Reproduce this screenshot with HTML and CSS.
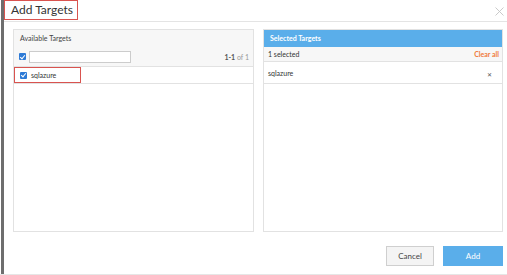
FILE: index.html
```html
<!DOCTYPE html>
<html lang="en">
<head>
  <meta charset="UTF-8">
  <title>Add Targets</title>
  <link rel="stylesheet" href="styles.css">
</head>
<body>
  <div class="frame">
    <div class="edge"></div>
    <div class="dialog">
      <div class="dialog-head">
        <div class="title">Add Targets</div>
        <svg class="close" width="9" height="9" viewBox="0 0 9 9">
          <path d="M0.5 0.5 L8.5 8.5 M8.5 0.5 L0.5 8.5" stroke="#c4c4c4" stroke-width="0.9" fill="none"/>
        </svg>
      </div>

      <div class="panels">
        <div class="panel">
          <div class="panel-head">Available Targets</div>
          <div class="search-row">
            <span class="check"></span>
            <input class="search" type="text">
            <span class="count"><b>1-1</b> of 1</span>
          </div>
          <div class="item-row">
            <div class="item highlight">
              <span class="check"></span>
              <span>sqlazure</span>
            </div>
          </div>
        </div>

        <div class="panel">
          <div class="panel-head blue">Selected Targets</div>
          <div class="sel-row">
            <span>1 selected</span>
            <span class="clear">Clear all</span>
          </div>
          <div class="sel-item">
            <span>sqlazure</span>
            <span class="remove">&#x2715;</span>
          </div>
        </div>
      </div>

      <div class="dialog-foot">
        <button class="btn">Cancel</button>
        <button class="btn primary">Add</button>
      </div>
    </div>
  </div>
</body>
</html>
```

FILE: styles.css
```css
body {
  margin: 0;
  font-family: "Lato", "Open Sans", Arial, sans-serif;
  color: #333;
  background: #fff;
}

.frame {
  display: flex;
  height: 275px;
  border-bottom: 1px solid #e6e6e6;
  box-sizing: border-box;
}

.edge {
  width: 3px;
  margin-left: 1px;
  background: #6e6e6e;
}

.dialog {
  flex: 1;
  display: flex;
  flex-direction: column;
}

.dialog-head {
  height: 22px;
  border-bottom: 1px solid #e4e4e4;
  display: flex;
  align-items: flex-start;
  justify-content: space-between;
  box-sizing: border-box;
}

.title {
  border: 1.5px solid #d9534f;
  height: 20px;
  width: 74px;
  box-sizing: border-box;
  padding-left: 6px;
  font-size: 12px;
  line-height: 17px;
  color: #333;
}

.close {
  margin: 7px 3px 0 0;
}

.panels {
  display: grid;
  grid-template-columns: 241px 240px;
  gap: 9px;
  padding: 7px 0 0 9px;
}

.panel {
  height: 203px;
  border: 1px solid #e2e2e2;
  box-sizing: border-box;
  font-size: 7px;
}

.panel-head {
  height: 17px;
  line-height: 17px;
  padding-left: 6px;
  background: #f7f7f7;
  color: #444;
}

.panel-head.blue {
  background: #5aaeea;
  color: #fff;
  font-weight: bold;
}

.search-row {
  display: flex;
  align-items: center;
  height: 19px;
  padding: 0 4px 0 5px;
  background: #f7f7f7;
  border-bottom: 1px solid #e2e2e2;
}

.check {
  width: 7px;
  height: 7px;
  border-radius: 1px;
  background: #2d7ad6;
  position: relative;
  flex: none;
}

.check::after {
  content: "";
  position: absolute;
  left: 2px;
  top: 0.5px;
  width: 2px;
  height: 4px;
  border: solid #fff;
  border-width: 0 1.2px 1.2px 0;
  transform: rotate(40deg);
}

.search {
  width: 102px;
  height: 12px;
  margin-left: 3px;
  border: 1px solid #ccc;
  box-sizing: border-box;
  padding: 0;
  background: #fff;
}

.count {
  margin-left: auto;
  color: #999;
}

.count b {
  color: #555;
}

.item-row {
  height: 16px;
  border-bottom: 1px solid #e2e2e2;
}

.item {
  display: flex;
  align-items: center;
  gap: 4px;
  height: 16px;
  width: 67px;
  box-sizing: border-box;
  padding-left: 5px;
}

.highlight {
  border: 1.5px solid #d9534f;
}

.sel-row {
  display: flex;
  justify-content: space-between;
  align-items: center;
  height: 14px;
  padding: 0 3px 0 4px;
  background: #f7f7f7;
  border-bottom: 1px solid #e2e2e2;
}

.clear {
  color: #f07a3c;
  font-weight: bold;
}

.sel-item {
  display: flex;
  justify-content: space-between;
  align-items: center;
  height: 21px;
  padding: 0 10px 0 4px;
  border-bottom: 1px solid #e2e2e2;
}

.remove {
  font-size: 6px;
  color: #555;
  margin-top: 4px;
}

.dialog-foot {
  display: flex;
  justify-content: flex-end;
  gap: 9px;
  padding: 14px 4px 0 0;
}

.btn {
  height: 20px;
  width: 48px;
  border: 1px solid #cfcfcf;
  background: #f4f4f4;
  color: #444;
  font-family: inherit;
  font-size: 8px;
  padding: 0;
}

.btn.primary {
  width: 60px;
  border-color: #5aaeea;
  background: #5aaeea;
  color: #fff;
}
```
